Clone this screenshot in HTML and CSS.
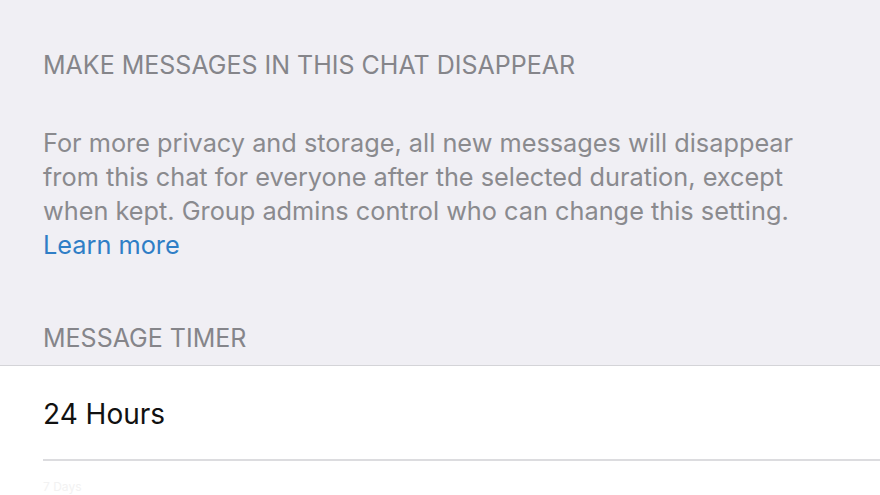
FILE: index.html
```html
<!DOCTYPE html>
<html lang="en">
<head>
    <meta charset="UTF-8">
    <meta name="viewport" content="width=device-width, initial-scale=1.0">
    <title>Disappearing Messages</title>
    <link rel="stylesheet" href="styles.css">
</head>
    <body>
        <div class="section">
            <h2 class="section-title">MAKE MESSAGES IN THIS CHAT DISAPPEAR</h2>
            <p class="section-text">
                For more privacy and storage, all new messages will disappear<br>
                from this chat for everyone after the selected duration, except<br>
                when kept. Group admins control who can change this setting.
                <a href="#" class="learn-more">Learn more</a>
            </p>
        </div>
        <div class="section timer-head">
            <h2 class="section-title">MESSAGE TIMER</h2>
        </div>
        <div class="list">
            <div class="list-row">
                <span>24 Hours</span>
            </div>
            <div class="list-row last">
                <span class="faded">7 Days</span>
            </div>
        </div>
    </body>
</html>
```

FILE: styles.css
```css
body
{
    margin: 0;
    font-family: Inter, "Noto Sans", sans-serif;
    background-color: #f0eff4;
    height: 495px;
    overflow: hidden;
}
.section
{
    padding: 0 43px;
}
.section-title
{
    margin: 0;
    padding-top: 50px;
    font-size: 25px;
    font-weight: 400;
    color: #85858a;
    line-height: 30px;
}
.section-text
{
    margin: 46px 0 0 0;
    font-size: 25.3px;
    line-height: 34px;
    color: #8a8a8e;
}
.learn-more
{
    display: block;
    color: #2f7ec6;
    text-decoration: none;
}
.timer-head .section-title
{
    padding-top: 61px;
    padding-bottom: 12px;
}
.list
{
    background: white;
    border-top: 1px solid #d4d4d8;
    height: 130px;
}
.list-row
{
    box-sizing: border-box;
    margin-left: 43px;
    height: 95px;
    padding-top: 3px;
    display: flex;
    align-items: center;
    font-size: 28px;
    color: #111;
    border-bottom: 2px solid #dcdcdf;
}
.list-row.last
{
    height: 34px;
    align-items: flex-start;
    padding-top: 20px;
    border-bottom: none;
}
.faded
{
    color: #f2f2f2;
    font-size: 12px;
    line-height: 12px;
}
```
